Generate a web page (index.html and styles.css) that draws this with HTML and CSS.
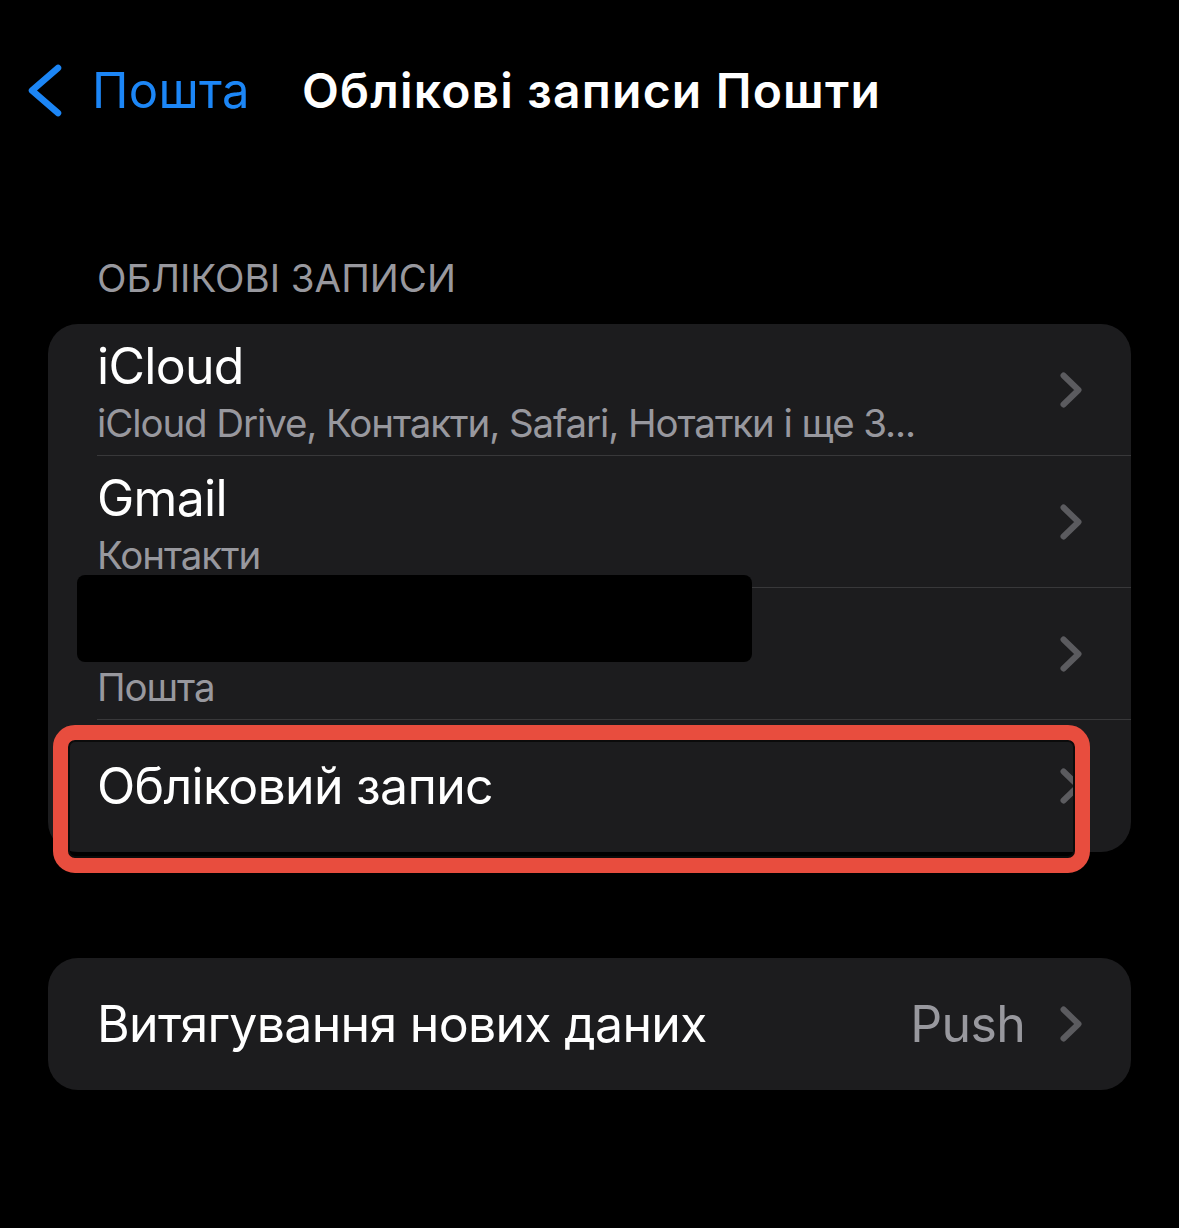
FILE: index.html
```html
<!DOCTYPE html>
<html lang="uk">
<head>
  <meta charset="UTF-8">
  <meta name="viewport" content="width=device-width, initial-scale=1.0">
  <title>Облікові записи Пошти</title>
  <link rel="stylesheet" href="styles.css">
</head>
<body>
  <div class="header">
    <a class="back" href="#">
      <svg class="back-icon" width="34" height="53" viewBox="0 0 34 53">
        <path d="M30 4 L4 26.5 L30 49" fill="none" stroke="#1c86f6" stroke-width="6.5" stroke-linecap="round" stroke-linejoin="round"/>
      </svg>
      <span>Пошта</span>
    </a>
    <h1 class="title">Облікові записи Пошти</h1>
  </div>

  <div class="section-title">ОБЛІКОВІ ЗАПИСИ</div>

  <div class="card accounts">
    <div class="row">
      <div class="row-inner">
        <div class="row-text">
          <div class="row-name">iCloud</div>
          <div class="row-sub">iCloud Drive, Контакти, Safari, Нотатки і ще 3...</div>
        </div>
        <svg class="chevron" width="22" height="36" viewBox="0 0 22 36"><path d="M3.5 3.5 L18.5 18 L3.5 32.5" fill="none" stroke="#5b5b5f" stroke-width="6" stroke-linecap="round" stroke-linejoin="round"/></svg>
      </div>
    </div>
    <div class="row">
      <div class="row-inner">
        <div class="row-text">
          <div class="row-name">Gmail</div>
          <div class="row-sub">Контакти</div>
        </div>
        <svg class="chevron" width="22" height="36" viewBox="0 0 22 36"><path d="M3.5 3.5 L18.5 18 L3.5 32.5" fill="none" stroke="#5b5b5f" stroke-width="6" stroke-linecap="round" stroke-linejoin="round"/></svg>
      </div>
    </div>
    <div class="row">
      <div class="row-inner">
        <div class="row-text">
          <div class="row-name">&nbsp;</div>
          <div class="row-sub">Пошта</div>
        </div>
        <svg class="chevron" width="22" height="36" viewBox="0 0 22 36"><path d="M3.5 3.5 L18.5 18 L3.5 32.5" fill="none" stroke="#5b5b5f" stroke-width="6" stroke-linecap="round" stroke-linejoin="round"/></svg>
      </div>
    </div>
    <div class="row last">
      <div class="row-inner">
        <div class="row-name">Обліковий запис</div>
        <svg class="chevron" width="22" height="36" viewBox="0 0 22 36"><path d="M3.5 3.5 L18.5 18 L3.5 32.5" fill="none" stroke="#5b5b5f" stroke-width="6" stroke-linecap="round" stroke-linejoin="round"/></svg>
      </div>
    </div>

    <!-- redacted account name -->
    <div class="redact"></div>
    <!-- highlight round the add row -->
    <div class="highlight-box"></div>
  </div>

  <div class="card fetch">
    <div class="row last">
      <div class="row-inner">
        <div class="row-name">Витягування нових даних</div>
        <div class="row-value">Push</div>
        <svg class="chevron" width="22" height="36" viewBox="0 0 22 36"><path d="M3.5 3.5 L18.5 18 L3.5 32.5" fill="none" stroke="#5b5b5f" stroke-width="6" stroke-linecap="round" stroke-linejoin="round"/></svg>
      </div>
    </div>
  </div>
</body>
</html>
```

FILE: styles.css
```css
:root {
  --bg-color: #000;
  --card-color: #1c1c1e;
  --text-color: #fff;
  --secondary-color: #98989e;
  --separator-color: #38383a;
  --blue-color: #1c86f6;
  --red-color: #e84d3e;
}

body {
  font-family: Inter, "Noto Sans", sans-serif;
  background-color: var(--bg-color);
  color: var(--text-color);
  margin: 0;
  padding: 0;
}

.header {
  display: flex;
  align-items: center;
  height: 182px;
  padding-left: 28px;
}

.back {
  display: flex;
  align-items: center;
  gap: 30px;
  color: var(--blue-color);
  text-decoration: none;
  font-size: 49px;
  letter-spacing: 0.3px;
  line-height: 1.2;
}

.back-icon {
  display: block;
}

.title {
  margin: 0 0 0 52px;
  font-size: 48px;
  font-weight: 600;
  letter-spacing: 1.2px;
  line-height: 1.2;
}

.section-title {
  margin: 73px 0 22px 97px;
  font-size: 38.5px;
  line-height: 47px;
  color: var(--secondary-color);
}

.card {
  position: relative;
  margin: 0 48px;
  background-color: var(--card-color);
  border-radius: 30px;
}

.fetch {
  margin-top: 106px;
}

.row {
  padding-left: 49px;
}

.row-inner {
  display: flex;
  align-items: center;
  height: 131px;
  padding-right: 49px;
  border-bottom: 1px solid var(--separator-color);
}

.row.last .row-inner {
  border-bottom: none;
  height: 132px;
}

.row-text {
  flex: 1;
  display: flex;
  flex-direction: column;
  gap: 2px;
  padding-top: 4px;
}

.row-name {
  flex: 1;
  font-size: 50px;
  letter-spacing: -0.7px;
  line-height: 61px;
}

.row-sub {
  font-size: 38.5px;
  letter-spacing: -1.1px;
  line-height: 48px;
  color: var(--secondary-color);
  white-space: nowrap;
}

.row-value {
  font-size: 50px;
  letter-spacing: -0.7px;
  line-height: 61px;
  color: var(--secondary-color);
  margin-right: 35px;
}

.chevron {
  display: block;
  flex-shrink: 0;
}

.redact {
  position: absolute;
  left: 29px;
  top: 251px;
  width: 675px;
  height: 87px;
  background-color: #000;
  border-radius: 8px;
}

.highlight-box {
  position: absolute;
  left: 5px;
  top: 401px;
  width: 1037px;
  height: 148px;
  box-sizing: border-box;
  border: 15px solid var(--red-color);
  border-radius: 22px;
  box-shadow: inset 0 0 0 2px #0b0b0b;
}
```
